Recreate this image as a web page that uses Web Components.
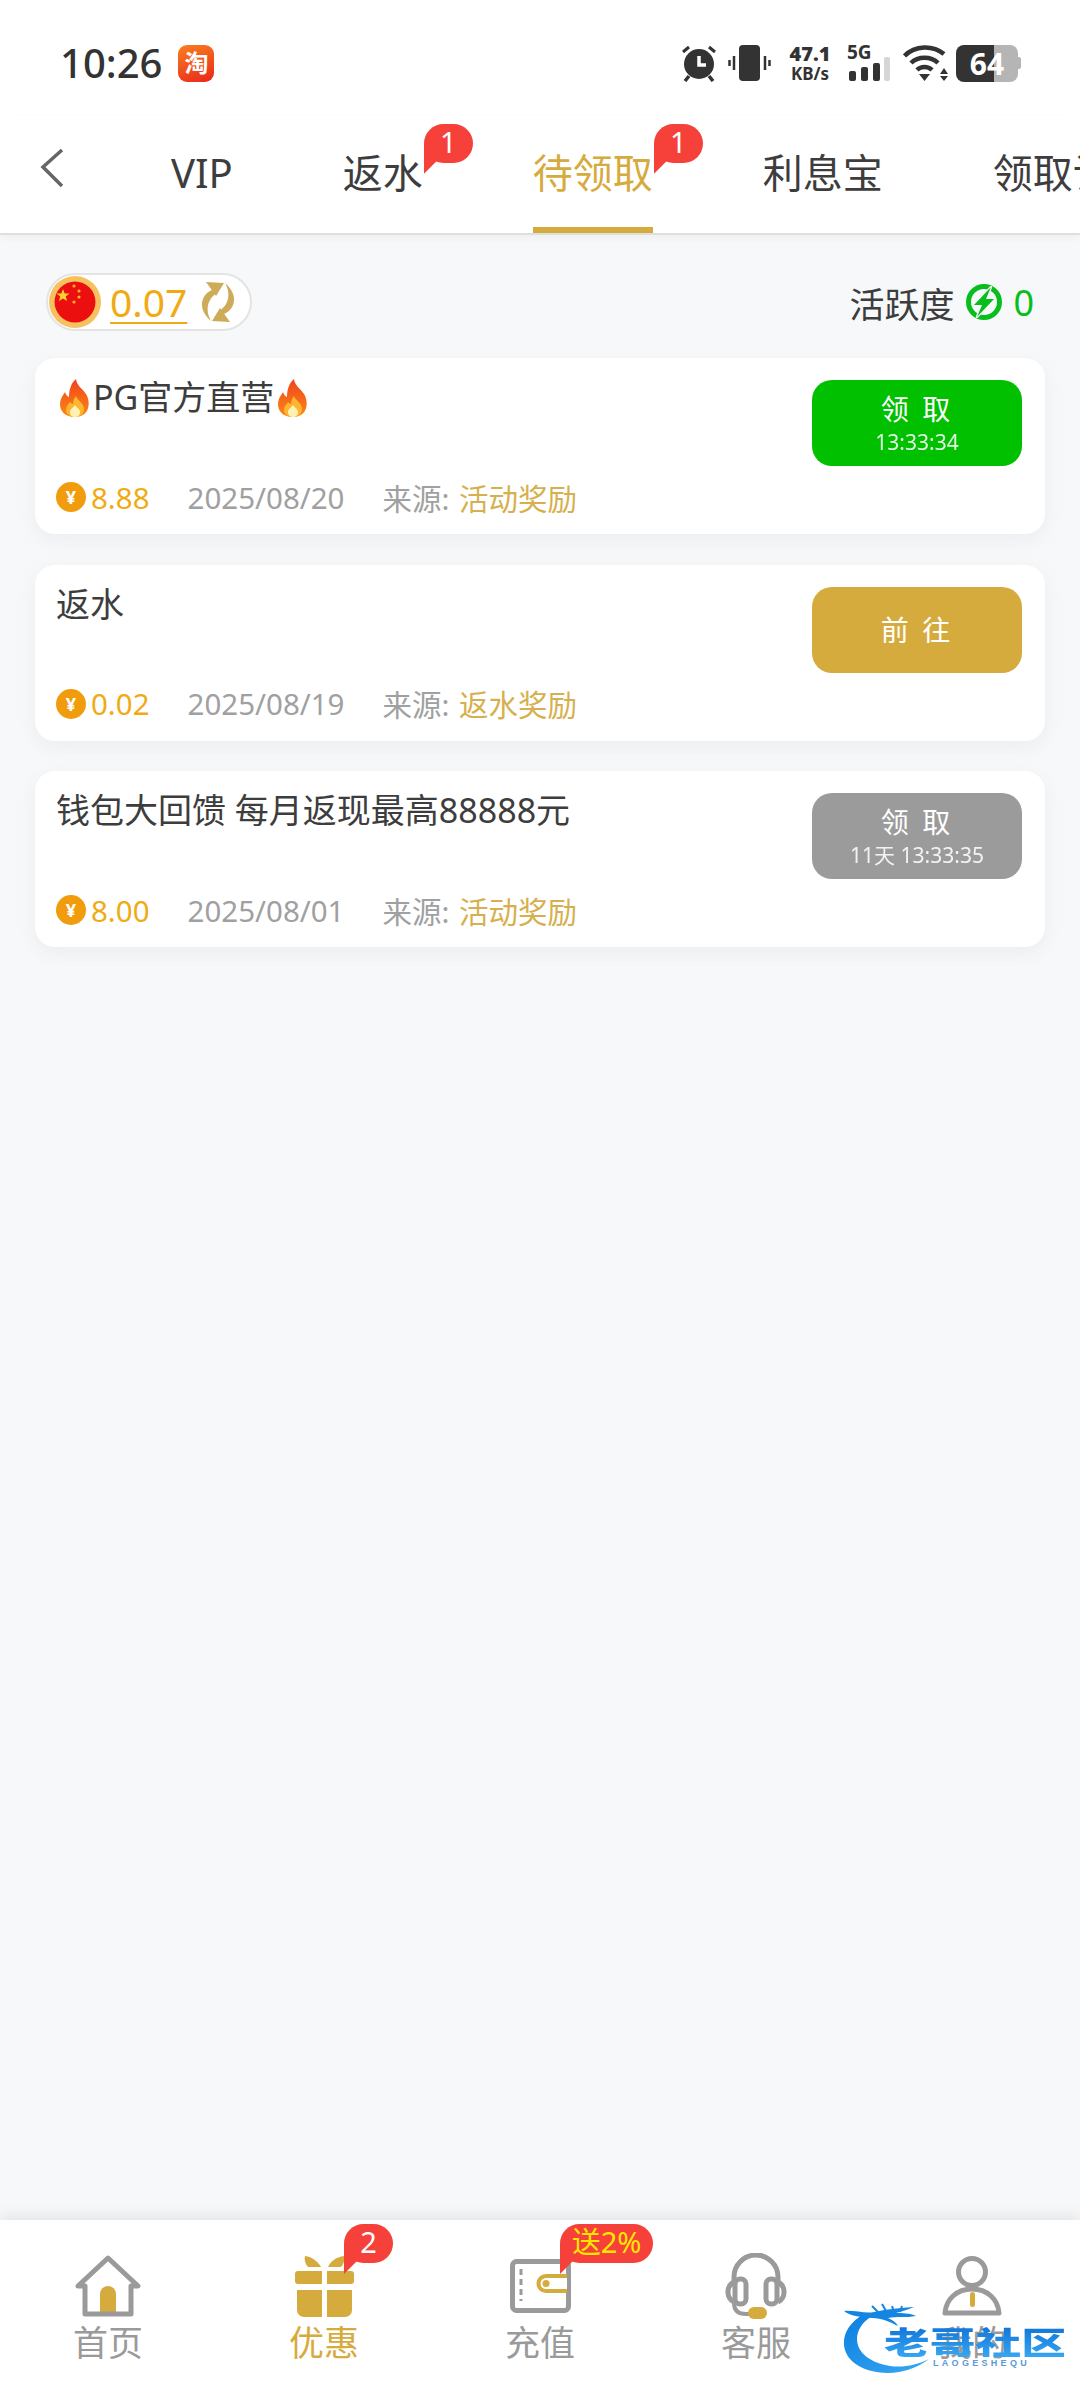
<!DOCTYPE html>
<html lang="zh">
<head>
<meta charset="utf-8">
<title>待领取</title>
<style>
html, body { margin: 0; padding: 0; background: #f7f8f9; }
body { font-family: "Noto Sans", "Noto Sans CJK SC", sans-serif; }
</style>
</head>
<body>
<reward-page>
  <status-bar></status-bar>
  <tab-bar>
    <tab-item>VIP</tab-item>
    <tab-item badge="1">返水</tab-item>
    <tab-item badge="1" active>待领取</tab-item>
    <tab-item>利息宝</tab-item>
    <tab-item>领取记录</tab-item>
  </tab-bar>
  <reward-list>
    <balance-row amount="0.07" activity="0"></balance-row>
    <reward-card amount="8.88" date="2025/08/20" source="活动奖励" kind="green" action="领 取" timer="13:33:34">
      <flame-icon></flame-icon>PG官方直营<flame-icon></flame-icon>
    </reward-card>
    <reward-card amount="0.02" date="2025/08/19" source="返水奖励" kind="gold" action="前 往">返水</reward-card>
    <reward-card amount="8.00" date="2025/08/01" source="活动奖励" kind="grey" action="领 取" timer="11天 13:33:35">钱包大回馈 每月返现最高88888元</reward-card>
  </reward-list>
  <bottom-nav>
    <nav-item label="首页">
      <svg width="80" height="66" viewBox="0 0 80 66"><path d="M32 62V41a8 8 0 0 1 16 0v21z" fill="#d6ab3e"/><path d="M10 33 40 5l30 28H63v28H17V33z" fill="none" stroke="#9a9a9a" stroke-width="5" stroke-linejoin="round"/></svg>
    </nav-item>
    <nav-item label="优惠" active badge="2">
      <svg width="80" height="66" viewBox="0 0 80 66"><g fill="#d6ab3e"><path d="M21 3c8 1 14 7 16 11H24c-3-3-4-8-3-11z"/><path d="M44 14c2-5 8-10 16-11 1 3 0 8-3 11z"/><path d="M14 18h24v13H14a3 3 0 0 1-3-3v-7a3 3 0 0 1 3-3z"/><path d="M43 18h24a3 3 0 0 1 3 3v7a3 3 0 0 1-3 3H43z"/><path d="M13 37h25v27H20a7 7 0 0 1-7-7z"/><path d="M43 37h25v20a7 7 0 0 1-7 7H43z"/></g></svg>
    </nav-item>
    <nav-item label="充值" badge="送2%" wide>
      <svg width="80" height="66" viewBox="0 0 80 66"><rect x="12.500" y="8.500" width="56" height="49" rx="4" fill="none" stroke="#9a9a9a" stroke-width="5"/><path d="M21 16v32" stroke="#9a9a9a" stroke-width="3" stroke-dasharray="6 4" fill="none"/><path d="M67 23H46a7.500 7.500 0 0 0 0 15h21" fill="#fff" stroke="#d6ab3e" stroke-width="4"/><circle cx="46" cy="30.500" r="3.500" fill="#d6ab3e"/></svg>
    </nav-item>
    <nav-item label="客服">
      <svg width="80" height="66" viewBox="0 0 80 66"><g fill="none" stroke="#9a9a9a" stroke-width="5"><path d="M18 28v-4a22 22 0 0 1 44 0v4"/><rect x="19" y="26" width="11" height="25" rx="5"/><rect x="50" y="26" width="11" height="25" rx="5"/><path d="M18 29a11 11 0 0 0-6 10 11 11 0 0 0 6 10"/><path d="M62 29a11 11 0 0 1 6 10 11 11 0 0 1-6 10"/><path d="M18 50c0 7 4 11 12 11h4" stroke-width="4"/></g><rect x="32" y="54" width="19" height="12" rx="6" fill="#d6ab3e"/></svg>
    </nav-item>
    <nav-item label="我的">
      <svg width="80" height="66" viewBox="0 0 80 66"><g fill="none" stroke="#9a9a9a" stroke-width="5"><circle cx="40" cy="19" r="13.500"/><path d="M13 60c1-14 12-24 27-24s26 10 27 24z" stroke-linejoin="round"/></g><rect x="38" y="39" width="5" height="15" rx="2.500" fill="#d6ab3e"/></svg>
    </nav-item>
  </bottom-nav>
  <logo-mark></logo-mark>
</reward-page>

<script>
(function() {
    /* small helper: every element clones one template into an open shadow root */
    function makeTemplate(html) {
        const t = document.createElement('template');
        t.innerHTML = html;
        return t;
    }

    class ShadowElement extends HTMLElement {
        constructor() {
            super();
            this.attachShadow({mode: 'open'});
            this.shadowRoot.appendChild(this.constructor.template.content.cloneNode(true));
        }
        $(selector) {
            return this.shadowRoot.querySelector(selector);
        }
    }

    class RewardPage extends ShadowElement {}
    RewardPage.template = makeTemplate(`
<style>
:host { display: flex; flex-direction: column; position: relative; width: 1080px; height: 2400px; overflow: hidden; background: #f7f8f9; }
</style>
<slot></slot>`);

    class StatusBar extends ShadowElement {}
    StatusBar.template = makeTemplate(`
<style>
:host { display: flex; align-items: center; height: 115px; box-sizing: border-box; padding: 11px 59px 0 60px; background: #fff; color: #333; font-family: "Noto Sans", sans-serif; }
.time { font-size: 40px; font-weight: 500; line-height: 1; }
.app { width: 36px; height: 37px; margin-left: 16px; border-radius: 9px; background: linear-gradient(160deg, #f9801f, #e9271b); color: #fff; font: 700 24px/34px "Noto Sans CJK SC", sans-serif; text-align: center; overflow: hidden; }
.right { margin-left: auto; display: flex; align-items: center; height: 38px; }
.net { width: 44px; margin-left: 17px; text-align: center; font-weight: 700; line-height: 1; }
.net b { display: block; font-size: 20px; line-height: 20px; }
.net span { display: block; font-size: 17px; line-height: 17px; margin-top: 1px; white-space: nowrap; }
.sig { width: 44px; margin-left: 15px; position: relative; height: 38px; }
.sig b { position: absolute; left: 0; top: -2px; font-size: 19px; line-height: 20px; }
.batt { width: 62px; height: 37px; margin-left: 6px; border-radius: 8px; background: linear-gradient(90deg, #333 38px, #b5b5b5 38px); color: #fff; font-size: 30px; font-weight: 700; line-height: 37px; text-align: center; }
.nub { width: 3px; height: 12px; background: #b5b5b5; border-radius: 0 2px 2px 0; }
</style>
<span class="time">10:26</span>
<span class="app">淘</span>
<div class="right">
  <svg width="38" height="38" viewBox="0 0 38 38"><circle cx="19" cy="20" r="15" fill="#333"/><path d="M19 12v9h7" fill="none" stroke="#fff" stroke-width="3.500"/><path d="M3 8l6-5M35 8l-6-5" stroke="#333" stroke-width="3"/><path d="M9 32l-4 5M29 32l4 5" stroke="#333" stroke-width="3.500"/></svg>
  <svg style="margin-left:10px" width="43" height="38" viewBox="0 0 43 38"><rect x="11" y="1" width="21" height="36" rx="4" fill="#333"/><path d="M6 12v14M1.500 16v6M37 12v14M41.500 16v6" stroke="#333" stroke-width="2.500"/></svg>
  <div class="net"><b>47.1</b><span>KB/s</span></div>
  <div class="sig"><b>5G</b>
    <svg style="position:absolute;left:0;bottom:0" width="44" height="38" viewBox="0 0 44 38"><g fill="#333"><rect x="2" y="27" width="7" height="10" rx="2"/><rect x="14" y="23" width="7" height="14" rx="2"/><rect x="26" y="19" width="7" height="18" rx="2"/></g><rect x="37" y="13" width="6" height="24" rx="2" fill="#d6d6d6"/></svg>
  </div>
  <svg style="margin-left:12px" width="47" height="38" viewBox="0 0 47 38"><g fill="none" stroke="#333" stroke-width="4.500"><path d="M1.500 12C12 1 30 1 41 10"/><path d="M8 19c7-7 20-7 27 0"/><path d="M14 26c4-4 11-4 15 0"/></g><path d="M16 30h11l-5.500 7zM41 24l-4 6h8zM41 37l-4-5h8z" fill="#333"/></svg>
  <div class="batt">64</div>
  <div class="nub"></div>
</div>`);

    class TabBar extends ShadowElement {}
    TabBar.template = makeTemplate(`
<style>
:host { display: flex; height: 120px; box-sizing: border-box; background: #fff; border-bottom: 2px solid #dfdfdf; overflow: hidden; position: relative; z-index: 1; box-shadow: 0 3px 8px rgba(0,0,0,.04); }
.back { flex: none; width: 171px; box-sizing: border-box; padding: 32px 0 0 38px; }
.tabs { display: flex; gap: 110px; flex: none; }
</style>
<div class="back"><svg width="28" height="42" viewBox="0 0 28 42"><path d="M24 3 5 20l19 19" fill="none" stroke="#666" stroke-width="3.500"/></svg></div>
<div class="tabs"><slot></slot></div>`);

    class TabItem extends ShadowElement {
        connectedCallback() {
            const badge = this.getAttribute('badge');
            if (badge) {
                this.$('bubble-badge').textContent = badge;
            } else {
                this.$('bubble-badge').remove();
            }
        }
    }
    TabItem.template = makeTemplate(`
<style>
:host { display: block; position: relative; flex: none; box-sizing: border-box; height: 118px; padding-top: 31px; font: 400 40px/54px "Noto Sans", "Noto Sans CJK SC", sans-serif; color: #3d3d3d; white-space: nowrap; }
:host([active]) { color: #d6ab3e; border-bottom: 6px solid #d6ab3e; }
bubble-badge { position: absolute; left: calc(100% + 1px); top: 9px; }
</style>
<slot></slot><bubble-badge></bubble-badge>`);

    class BubbleBadge extends ShadowElement {}
    BubbleBadge.template = makeTemplate(`
<style>
:host { display: block; box-sizing: border-box; min-width: 49px; height: 39px; padding: 0 6px; border-radius: 20px; background: #f6403a; color: #fff; font: 400 29px/36px "Noto Sans", "Noto Sans CJK SC", sans-serif; text-align: center; white-space: nowrap; }
:host::before { content: ""; position: absolute; left: 0; top: 20px; width: 18px; height: 30px; background: #f6403a; clip-path: polygon(0 0, 100% 40%, 0 100%); }
</style>
<slot></slot>`);

    class RewardList extends ShadowElement {}
    RewardList.template = makeTemplate(`
<style>
:host { display: flex; flex-direction: column; flex: 1; min-height: 0; gap: 30.5px; padding: 39px 35px 0; }
</style>
<slot></slot>`);

    class BalanceRow extends ShadowElement {
        connectedCallback() {
            this.$('.amount').textContent = this.getAttribute('amount');
            this.$('.zero').textContent = this.getAttribute('activity');
        }
    }
    BalanceRow.template = makeTemplate(`
<style>
:host { display: flex; align-items: center; justify-content: space-between; height: 56px; margin-bottom: -2.500px; padding: 0 11px; font-family: "Noto Sans", "Noto Sans CJK SC", sans-serif; }
.pill { display: flex; align-items: center; box-sizing: border-box; width: 206px; height: 58px; border: 2px solid #e4e4e4; border-radius: 29px; background: #fff; }
.amount { margin-left: 8px; color: #f0ab14; font-size: 39px; line-height: 50px; text-decoration: underline; text-decoration-thickness: 2px; text-underline-offset: 5px; }
.refresh { margin-left: 11px; }
.activity { display: flex; align-items: center; color: #3d3d3d; font-size: 35px; }
.activity svg { margin: 0 10px 0 11px; }
.zero { color: #08be1e; font-size: 36px; }
</style>
<div class="pill">
  <svg width="54" height="54" viewBox="0 0 54 54"><circle cx="27" cy="27" r="26" fill="#f6c260"/><circle cx="27" cy="27" r="20.500" fill="#ec0f0f"/><path d="m15 14 1.700 4.500h4.800l-3.800 3 1.400 4.600-4.100-2.700-4 2.700 1.300-4.600-3.800-3h4.800z" fill="#fbd32b"/><g fill="#f6b12b"><circle cx="26" cy="11" r="1.600"/><circle cx="31" cy="16" r="1.600"/><circle cx="31" cy="22" r="1.600"/><circle cx="26" cy="27" r="1.600"/></g></svg>
  <span class="amount"></span>
  <svg class="refresh" width="40" height="42" viewBox="0 0 40 42"><g fill="#cdab58"><path d="M14 9C4 13-2 27 13 40 7 30 9 18 19 12z"/><path d="M8 1 26 2 18 15z"/><path d="M26 33c10-4 16-18 1-31 6 10 4 22-6 28z"/><path d="M32 41 14 40l8-13z"/></g></svg>
</div>
<div class="activity">活跃度
  <svg width="38" height="38" viewBox="0 0 38 38"><circle cx="19" cy="19" r="15.500" fill="none" stroke="#08be1e" stroke-width="5"/><path d="M26 4 9 22h8l-5 12 17-18h-8z" fill="#08be1e" stroke="#f7f8f9" stroke-width="2.500" stroke-linejoin="round" paint-order="stroke"/></svg>
  <span class="zero"></span>
</div>`);

    class FlameIcon extends ShadowElement {}
    FlameIcon.template = makeTemplate(`
<style>
:host { display: inline-block; width: 37px; height: 40px; vertical-align: -8px; }
svg { display: block; margin: 0 auto; }
</style>
<svg width="34" height="40" viewBox="0 0 34 40"><defs><linearGradient id="f" x1="0" y1="0" x2="0" y2="1"><stop offset="0" stop-color="#f0431c"/><stop offset="1" stop-color="#fb8a14"/></linearGradient></defs><path d="M18 1c1 7 6 9 10 15 5 8 4 23-11 23C4 39 0 29 3 21c1-3 3-5 4-7 1 3 2 4 4 5 0-7 2-14 7-18z" fill="url(#f)"/><path d="M18 18c1 4 8 7 8 13 0 5-4 8-9 8s-9-3-9-7c0-4 3-6 4-8 1 1 2 2 3 2 0-3 1-6 3-8z" fill="#fdb62f"/><path d="M17 27c2 3 5 4 5 7 0 3-2 5-5 5s-5-2-5-5c0-3 3-4 5-7z" fill="#fff0b3"/></svg>`);

    class RewardCard extends ShadowElement {
        connectedCallback() {
            this.$('.amount').textContent = this.getAttribute('amount');
            this.$('.date').textContent = this.getAttribute('date');
            this.$('.value').textContent = this.getAttribute('source');
            this.$('.btn').classList.add(this.getAttribute('kind'));
            this.$('.action').textContent = this.getAttribute('action');
            const timer = this.getAttribute('timer');
            if (timer) {
                this.$('.timer').textContent = timer;
            } else {
                this.$('.timer').remove();
            }
        }
    }
    RewardCard.template = makeTemplate(`
<style>
:host { display: block; height: 176px; box-sizing: border-box; padding: 20px 23px 0 21px; background: #fff; border-radius: 20px; box-shadow: 0 6px 18px rgba(190,200,215,.22); font-family: "Noto Sans", "Noto Sans CJK SC", sans-serif; }
.top { display: flex; justify-content: space-between; height: 88px; }
.title { color: #3d3d3d; font-size: 34px; line-height: 38px; white-space: nowrap; }
.btn { flex: none; display: flex; flex-direction: column; align-items: center; justify-content: center; width: 210px; height: 86px; margin-top: 2px; border-radius: 20px; color: #fff; }
.green { background: #00c000; }
.gold { background: #d6ab3e; }
.grey { background: #9b9b9b; }
.action { font-size: 28px; line-height: 38px; letter-spacing: 3px; }
.timer { font-size: 21px; line-height: 28px; opacity: .88; }
.meta { display: flex; align-items: center; gap: 38px; margin-top: 11px; height: 40px; font-size: 29.500px; white-space: nowrap; }
.money { display: flex; align-items: center; gap: 5px; color: #f0ab14; }
.coin { width: 30px; height: 30px; border-radius: 50%; background: #f09c0c; color: #fff; font-size: 18px; font-weight: 700; line-height: 30px; text-align: center; }
.date, .source { color: #a0a0a0; }
.value { color: #d6b04e; margin-left: 2px; }
</style>
<div class="top">
  <div class="title"><slot></slot></div>
  <div class="btn"><span class="action"></span><span class="timer"></span></div>
</div>
<div class="meta">
  <span class="money"><span class="coin">¥</span><span class="amount"></span></span>
  <span class="date"></span>
  <span class="source">来源: <span class="value"></span></span>
</div>`);

    class BottomNav extends ShadowElement {}
    BottomNav.template = makeTemplate(`
<style>
:host { display: grid; grid-template-columns: repeat(5, 1fr); flex: none; height: 180px; box-sizing: border-box; padding-top: 33px; background: #fff; box-shadow: 0 -6px 14px rgba(0,0,0,.07); position: relative; }
</style>
<slot></slot>`);

    class NavItem extends ShadowElement {
        connectedCallback() {
            this.$('.label').textContent = this.getAttribute('label');
            const badge = this.getAttribute('badge');
            if (badge) {
                this.$('bubble-badge').textContent = badge;
            } else {
                this.$('bubble-badge').remove();
            }
        }
    }
    NavItem.template = makeTemplate(`
<style>
:host { display: flex; flex-direction: column; align-items: center; position: relative; color: #9a9a9a; font: 400 35px/48px "Noto Sans", "Noto Sans CJK SC", sans-serif; }
:host([active]) { color: #d6ab3e; }
.icon { height: 66px; }
::slotted(svg) { display: block; }
bubble-badge { position: absolute; left: 128px; top: -29px; }
:host([wide]) bubble-badge { min-width: 93px; padding: 0 4px; color: #ffe600; }
</style>
<div class="icon"><slot></slot></div>
<div class="label"></div>
<bubble-badge></bubble-badge>`);

    class LogoMark extends ShadowElement {}
    LogoMark.template = makeTemplate(`
<style>
:host { display: block; position: absolute; left: 842px; top: 2303px; width: 226px; height: 80px; pointer-events: none; }
svg { position: absolute; left: 0; top: 0; }
.name { position: absolute; left: 42px; top: 17px; width: 142px; font: 900 36px/40px "Noto Sans CJK SC", sans-serif; white-space: nowrap; transform: scale(1.27, .86); transform-origin: 0 50%; background: linear-gradient(#0b6fd6, #37a6f2); -webkit-background-clip: text; background-clip: text; color: transparent; }
.latin { position: absolute; left: 91px; top: 54px; font: 700 9px/12px "Liberation Sans", sans-serif; letter-spacing: 3.300px; color: #5a9ad6; white-space: nowrap; }
</style>
<svg width="226" height="80" viewBox="0 0 226 80"><defs><linearGradient id="d" x1="0" y1="0" x2="1" y2="1"><stop offset="0" stop-color="#0b7fe0"/><stop offset="1" stop-color="#3aa8f4"/></linearGradient></defs>
<path d="M22 11C6 20-1 34 3 47c5 17 30 26 54 22 12-2 22-7 30-13-12 6-26 9-39 7C29 60 15 50 15 36c0-8 5-17 14-22z" fill="url(#d)"/>
<path d="M2 8c10-1 22 3 30 1 14-3 26-4 40-5-7 3-12 4-18 6 6 0 14 0 20 3-10 2-20 0-28 2 4 2 8 4 10 8-8-4-16-8-26-8C18 14 8 13 2 8z" fill="#1485e2"/>
<path d="M30 3l6 6M40 1l4 7M50 3l2 6M60 3l-2 6" stroke="#1485e2" stroke-width="2"/></svg>
<span class="name">老哥社区</span>
<span class="latin">LAOGESHEQU</span>`);

    customElements.define('reward-page', RewardPage);
    customElements.define('status-bar', StatusBar);
    customElements.define('tab-bar', TabBar);
    customElements.define('bubble-badge', BubbleBadge);
    customElements.define('tab-item', TabItem);
    customElements.define('reward-list', RewardList);
    customElements.define('balance-row', BalanceRow);
    customElements.define('flame-icon', FlameIcon);
    customElements.define('reward-card', RewardCard);
    customElements.define('bottom-nav', BottomNav);
    customElements.define('nav-item', NavItem);
    customElements.define('logo-mark', LogoMark);
})();
</script>
</body>
</html>
